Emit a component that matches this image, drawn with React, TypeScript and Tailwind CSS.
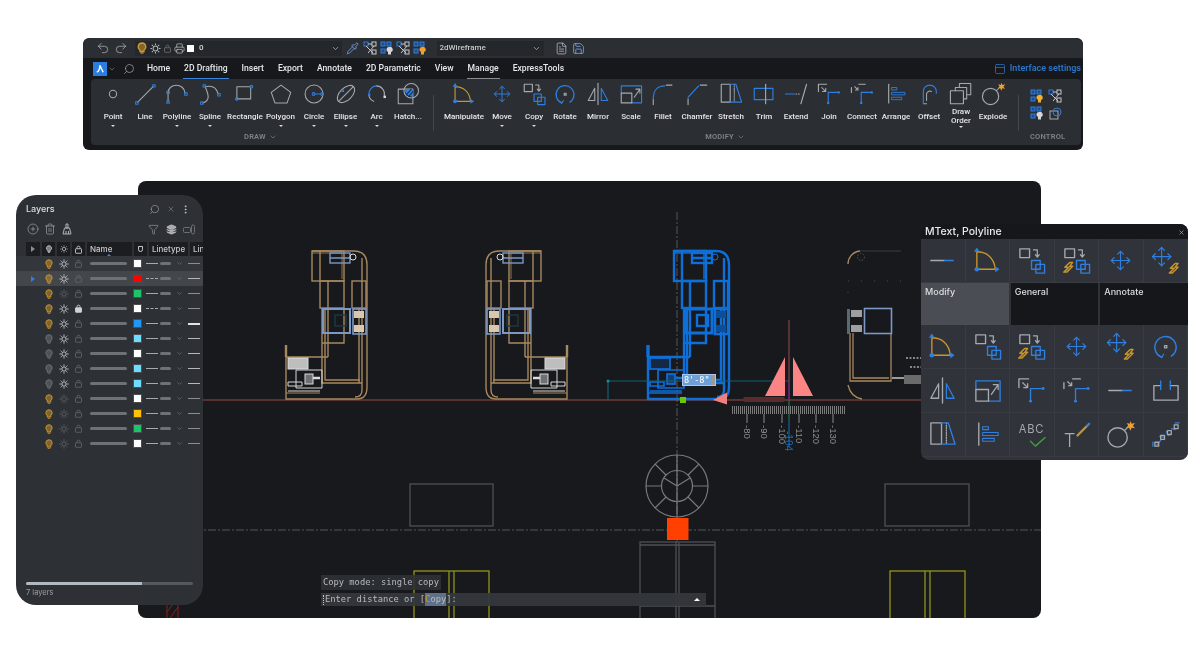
import { ReactNode } from 'react';
import { ChevronDown, Search, X, Filter, MoreVertical, CirclePlus, Trash2, Undo2, Redo2, Printer, FileText, Save, Pipette, PanelTop, Layers } from 'lucide-react';

const G = '#a6a9ad';
const B = '#2e7fe0';
const A = '#c9952b';

function Ico({ size = 26, children }: { size?: number; children: ReactNode }) {
  return (
    <svg width={size} height={size} viewBox="0 0 32 32" fill="none" strokeWidth={1.3} strokeLinecap="round" strokeLinejoin="round">
      {children}
    </svg>
  );
}

const Sq = ({ x, y, s = 3, c = B }: { x: number; y: number; s?: number; c?: string }) => (
  <rect x={x - s / 2} y={y - s / 2} width={s} height={s} stroke={c} />
);

const Bolt = ({ x, y }: { x: number; y: number }) => (
  <path transform={`translate(${x} ${y})`} d="M6 0 L1 5 H5 L0 10 M6 0 H9 L6 4 H9 L3 10 H0" stroke={A} strokeWidth={1.5} />
);

const MoveArrows = ({ x = 16, y = 16, r = 9.5 }: { x?: number; y?: number; r?: number }) => (
  <g stroke={B} strokeWidth={1.2}>
    <path d={`M${x - r} ${y} H${x + r} M${x} ${y - r} V${y + r}`} />
    <path d={`M${x - r + 3} ${y - 3} L${x - r} ${y} L${x - r + 3} ${y + 3} M${x + r - 3} ${y - 3} L${x + r} ${y} L${x + r - 3} ${y + 3} M${x - 3} ${y - r + 3} L${x} ${y - r} L${x + 3} ${y - r + 3} M${x - 3} ${y + r - 3} L${x} ${y + r} L${x + 3} ${y + r - 3}`} />
  </g>
);

const CopyShape = ({ dx = 0, dy = 0 }: { dx?: number; dy?: number }) => (
  <g transform={`translate(${dx} ${dy})`}>
    <rect x="4" y="4" width="10" height="9" stroke={G} strokeWidth={1.4} />
    <path d="M18 5 H22 V12 M20 10 L22 12.5 L24 10" stroke={G} />
    <rect x="16" y="16" width="9" height="9" stroke={B} strokeWidth={1.4} />
    <rect x="20.5" y="20" width="9" height="9" stroke={B} strokeWidth={1.4} />
  </g>
);

const icons: Record<string, ReactNode> = {
  Point: <circle cx="16" cy="16" r="4.5" stroke={G} />,
  Line: (
    <>
      <path d="M7 26 L26 7" stroke={G} />
      <Sq x={6} y={27} />
      <Sq x={27} y={6} />
    </>
  ),
  Polyline: (
    <>
      <path d="M5 25 V15 C5 2 25 2 26 15" stroke={G} />
      <Sq x={5} y={14} />
      <Sq x={5} y={26} />
      <Sq x={27} y={16} />
    </>
  ),
  Spline: (
    <>
      <path d="M7 27 C17 24 14 16 10 7 C18 5 24 8 26 16" stroke={G} />
      <Sq x={6} y={27} />
      <Sq x={9} y={6} />
      <Sq x={27} y={17} />
    </>
  ),
  Rectangle: (
    <>
      <rect x="6" y="7" width="17" height="15" stroke={G} />
      <circle cx="24" cy="7" r="1.6" stroke={B} />
      <circle cx="6" cy="22" r="1.6" stroke={B} />
    </>
  ),
  Polygon: <path d="M16 5 L28 14 L23.5 27 H8.5 L4 14 Z" stroke={G} />,
  Circle: (
    <>
      <circle cx="16" cy="16" r="11" stroke={G} />
      <path d="M17 16 H24" stroke={B} />
      <circle cx="15.5" cy="16" r="1.7" stroke={B} />
      <circle cx="26" cy="16" r="1.7" stroke={B} />
    </>
  ),
  Ellipse: (
    <>
      <ellipse cx="16" cy="16" rx="13" ry="7.5" transform="rotate(-45 16 16)" stroke={G} />
      <path d="M7 25 L25 7" stroke={G} />
      <Sq x={12} y={12} s={2} />
    </>
  ),
  Arc: (
    <>
      <path d="M15 6 A10 10 0 0 1 25 18" stroke={G} />
      <path d="M6 16 A10 10 0 0 1 15 6" stroke={B} />
      <path d="M6 18 A10 10 0 0 0 12 25" stroke={G} />
      <circle cx="6.5" cy="17" r="1" stroke={B} />
      <rect x="24" y="18" width="3" height="3" fill="#ddd" />
    </>
  ),
  'Hatch...': (
    <>
      <rect x="4" y="10" width="18" height="18" stroke={G} />
      <circle cx="20" cy="12" r="9" stroke={G} />
      <path d="M12 10 H22 V19 A9 9 0 0 1 12 10 Z" fill={B} />
      <path d="M14 17 L20 10 M17 19 L22 13" stroke="#14304f" />
    </>
  ),
  Manipulate: (
    <>
      <path d="M5 25 V7 C15 7 23 13 24 25 H5" stroke={A} strokeWidth={1.4} />
      <path d="M5 2.5 L2 7 H8 Z M28.5 25 L24 22 V28 Z" fill={B} />
      <circle cx="5" cy="25" r="2.4" fill={B} />
    </>
  ),
  Move: <MoveArrows />,
  Copy: <CopyShape />,
  CopyL: (
    <>
      <CopyShape />
      <Bolt x={3} y={18} />
    </>
  ),
  MoveL: (
    <>
      <MoveArrows x={12} y={12} />
      <Bolt x={20} y={19} />
    </>
  ),
  Rotate: (
    <>
      <path d="M12 27 A11 11 0 1 1 22 26" stroke={B} strokeWidth={1.5} />
      <path d="M9 25 L12 27.5 L14 24" stroke={B} />
      <rect x="15" y="15" width="2.4" height="2.4" stroke={G} />
    </>
  ),
  Mirror: (
    <>
      <path d="M16 3 V29" stroke={G} strokeWidth={1.4} />
      <path d="M12 9 V24 H4 Z" stroke={G} strokeWidth={1.3} />
      <path d="M20 9 V24 H28 Z" stroke={B} strokeWidth={1.3} />
    </>
  ),
  Scale: (
    <>
      <path d="M4 15 V6 H29 V27 H17" stroke={B} strokeWidth={1.4} />
      <rect x="4" y="15" width="13" height="12" stroke={G} strokeWidth={1.4} />
      <path d="M20 20 L27 10 M22 10 H27 V15" stroke={G} />
    </>
  ),
  Fillet: (
    <>
      <path d="M4 22 C4 12 9 6 18 6" stroke={B} strokeWidth={1.4} />
      <path d="M4 23 V29 M20 5 H27" stroke={G} strokeWidth={1.4} />
    </>
  ),
  Chamfer: (
    <>
      <path d="M5 20 L18 6" stroke={B} strokeWidth={1.4} />
      <path d="M5 22 V29 M20 5 H28" stroke={G} strokeWidth={1.4} />
    </>
  ),
  Stretch: (
    <>
      <rect x="4" y="4" width="11" height="22" stroke={G} strokeWidth={1.4} />
      <path d="M20 4 V26" stroke={G} strokeDasharray="1 1.5" />
      <path d="M15 4 H22 L29 26 H15" stroke={B} strokeWidth={1.4} />
    </>
  ),
  Trim: (
    <>
      <rect x="4" y="9" width="23" height="14" stroke={B} strokeWidth={1.4} />
      <path d="M18 4 V28" stroke={G} strokeWidth={1.4} />
    </>
  ),
  Extend: (
    <>
      <path d="M3 16 H14" stroke={B} strokeWidth={1.4} />
      <path d="M16 16 H20" stroke={G} strokeDasharray="1 2" />
      <path d="M22 28 L29 4" stroke={G} strokeWidth={1.4} />
    </>
  ),
  Join: (
    <>
      <path d="M3 13 V4 H13" stroke={G} strokeWidth={1.4} />
      <path d="M7 8 L12 13 M12 9 V13 H8" stroke={G} />
      <path d="M15 27 V14 H28" stroke={B} strokeWidth={1.4} />
      <circle cx="15" cy="27" r="1.5" fill={B} />
      <circle cx="28" cy="14" r="1.5" fill={B} />
    </>
  ),
  Connect: (
    <>
      <path d="M3 8 V14 M12 4 H20" stroke={G} strokeWidth={1.4} />
      <path d="M7 7 L11 11 M11 8 V11 H8" stroke={G} />
      <path d="M15 27 V14 H28" stroke={B} strokeWidth={1.4} />
      <circle cx="15" cy="27" r="1.5" fill={B} />
      <circle cx="28" cy="14" r="1.5" fill={B} />
    </>
  ),
  Arrange: (
    <>
      <path d="M7 4 V27" stroke={G} strokeWidth={1.4} />
      <rect x="11" y="8" width="6" height="3" stroke={B} strokeWidth={1.1} />
      <rect x="11" y="14" width="16" height="3" stroke={B} strokeWidth={1.1} />
      <rect x="11" y="20" width="12" height="3" stroke={B} strokeWidth={1.1} />
    </>
  ),
  Offset: (
    <>
      <path d="M9 28 V13 A8 8 0 0 1 25 13 V15" stroke={B} strokeWidth={1.4} />
      <path d="M13 28 H10 M13 24 V16 A4 4 0 0 1 19 13" stroke={G} />
    </>
  ),
  'Draw Order': (
    <>
      <path d="M14 8 V3 H28 V17 H23" stroke={G} />
      <path d="M9 12 V8 H23 V22 H19" stroke={G} />
      <rect x="3" y="12" width="16" height="16" stroke={G} strokeWidth={1.4} />
    </>
  ),
  Explode: (
    <>
      <circle cx="13" cy="19" r="10" stroke={G} strokeWidth={1.4} />
      <path d="M20 12 L24 8" stroke={G} />
      <path d="M26.5 2 L27.5 5 L31 4 L28.8 7 L31 9.5 L27.5 9 L26 12 L25 9 L22 9 L24 7 L22.5 4 L25.5 5 Z" fill="#f0a030" />
    </>
  ),
  LineSeg: (
    <>
      <path d="M4 16 H18" stroke={G} strokeWidth={1.5} />
      <path d="M18 16 H27" stroke={B} strokeWidth={1.5} />
    </>
  ),
  Brackets: (
    <>
      <path d="M4 11 V26 H29 V11 H21 M4 11 H11" stroke={G} strokeWidth={1.4} />
      <path d="M11 6 V15 M21 6 V15" stroke={B} strokeWidth={1.4} />
    </>
  ),
  ABC: (
    <>
      <text x="16" y="14" textAnchor="middle" fontSize="11.5" fill={G} stroke="none" fontFamily="Inter, sans-serif" letterSpacing="0.8">ABC</text>
      <path d="M15 23 L20 28 L30 19" stroke="#3ea03a" strokeWidth={1.4} />
    </>
  ),
  TPencil: (
    <>
      <text x="9" y="29" textAnchor="middle" fontSize="19" fill={G} stroke="none" fontFamily="Inter, sans-serif" fontWeight="300">T</text>
      <path d="M17 17 L27 7" stroke={A} strokeWidth={2.4} />
      <path d="M27 7 L29 5" stroke={B} strokeWidth={2.4} />
    </>
  ),
  Chain: (
    <>
      <path d="M3 28 V24 M7 27 L11 22 M10 18 L15 19 M17 13 L19 17 M22 10 L26 11 M26 4 L30 4" stroke={B} />
      <rect x="5" y="24" width="4" height="4" stroke={G} />
      <rect x="11" y="17" width="4" height="4" stroke={G} />
      <rect x="18" y="12" width="4" height="4" stroke={G} />
      <rect x="25" y="6" width="4" height="4" stroke={G} />
    </>
  ),
};

const Caret = () => <span className="w-0 h-0 border-x-[2px] border-x-transparent border-t-[2.5px] border-t-[#d8dade]" />;

const drawTools = [
  { name: 'Point', w: 'w-[32px]', caret: true },
  { name: 'Line', w: 'w-[32px]' },
  { name: 'Polyline', w: 'w-[32px]', caret: true },
  { name: 'Spline', w: 'w-[34px]', caret: true },
  { name: 'Rectangle', w: 'w-[36px]' },
  { name: 'Polygon', w: 'w-[35px]', caret: true },
  { name: 'Circle', w: 'w-[32px]', caret: true },
  { name: 'Ellipse', w: 'w-[31px]', caret: true },
  { name: 'Arc', w: 'w-[31px]', caret: true },
  { name: 'Hatch...', w: 'w-[32px]' },
];

const modifyTools = [
  { name: 'Manipulate', w: 'w-[40px]' },
  { name: 'Move', w: 'w-[36px]', caret: true },
  { name: 'Copy', w: 'w-[28px]', caret: true },
  { name: 'Rotate', w: 'w-[34px]' },
  { name: 'Mirror', w: 'w-[32px]' },
  { name: 'Scale', w: 'w-[34px]' },
  { name: 'Fillet', w: 'w-[30px]' },
  { name: 'Chamfer', w: 'w-[38px]' },
  { name: 'Stretch', w: 'w-[30px]' },
  { name: 'Trim', w: 'w-[36px]' },
  { name: 'Extend', w: 'w-[28px]' },
  { name: 'Join', w: 'w-[38px]' },
  { name: 'Connect', w: 'w-[28px]' },
  { name: 'Arrange', w: 'w-[40px]' },
  { name: 'Offset', w: 'w-[26px]' },
  { name: 'Draw Order', w: 'w-[38px]', caret: true },
  { name: 'Explode', w: 'w-[26px]' },
];

function Tool({ name, w, caret }: { name: string; w: string; caret?: boolean }) {
  const stacked = name === 'Draw Order';
  return (
    <div className={`${w} flex flex-col items-center`}>
      <div className="h-[30px] flex items-center justify-center">
        <Ico>{icons[name]}</Ico>
      </div>
      {stacked ? (
        <div className="mt-[-1px] text-center text-[8px] leading-[8.5px] font-medium text-[#e4e6e8]">
          Draw
          <br />
          Order
        </div>
      ) : (
        <div className="mt-[3px] h-[10px] whitespace-nowrap text-[8px] leading-[10px] font-medium text-[#e4e6e8]">{name}</div>
      )}
      {caret && <div className={stacked ? 'mt-[1px] flex' : 'mt-[3px] flex'}><Caret /></div>}
    </div>
  );
}

const GroupLabel = ({ children }: { children: string }) => (
  <div className="h-[12px] flex items-center justify-center gap-[3px] text-[7.5px] font-semibold tracking-[0.2px] text-[#7f8388]">
    {children}
    {children !== 'CONTROL' && <ChevronDown size={8} color="#7f8388" />}
  </div>
);

const tabs = ['Home', '2D Drafting', 'Insert', 'Export', 'Annotate', '2D Parametric', 'View', 'Manage', 'ExpressTools'];

const Bulb = ({ c, size = 10 }: { c: string; size?: number }) => (
  <svg width={size} height={size} viewBox="0 0 12 12" fill="none" stroke={c} strokeWidth="1.3">
    <path d="M6 1 A3.8 3.8 0 0 1 8 8 V9.5 H4 V8 A3.8 3.8 0 0 1 6 1 Z" fill={c} fillOpacity="0.55" />
    <path d="M4.5 11 H7.5" />
  </svg>
);

const Sun = ({ c, size = 10 }: { c: string; size?: number }) => (
  <svg width={size} height={size} viewBox="0 0 12 12" fill="none" stroke={c} strokeWidth="1.1">
    <circle cx="6" cy="6" r="2.6" />
    <path d="M6 .5 V2.2 M6 9.8 V11.5 M.5 6 H2.2 M9.8 6 H11.5 M2 2 L3.2 3.2 M8.8 8.8 L10 10 M2 10 L3.2 8.8 M8.8 3.2 L10 2" />
  </svg>
);

const Lock = ({ c, fill }: { c: string; fill?: boolean }) => (
  <svg width="9" height="9" viewBox="0 0 12 12" fill="none" stroke={c} strokeWidth="1.2">
    <path d="M4 5 V3.5 A2 2 0 0 1 8 3.5 V5" />
    <rect x="2" y="5" width="8" height="6" rx="0.6" fill={fill ? c : 'none'} />
  </svg>
);

const Broom = () => (
  <svg width="12" height="12" viewBox="0 0 12 12" fill="none" stroke="#b0b3b7" strokeWidth="1">
    <path d="M5 1 H7 V5 H5 Z M3.5 5 H8.5 L10 11 H2 Z M5 8 V11 M7.5 8 V11" />
  </svg>
);

const QuadDots = ({ bulb }: { bulb: string }) => (
  <svg width="15" height="15" viewBox="0 0 15 15" fill="none">
    <rect x="1" y="1" width="4" height="4" stroke={B} fill="#1d4f8c" />
    <rect x="7" y="1" width="4" height="4" stroke={B} fill="#1d4f8c" />
    <rect x="1" y="8" width="4" height="4" stroke={B} fill="#1d4f8c" />
    <path d="M9 6 A2.6 2.6 0 0 1 11 11 V13.5 H8 V11 A2.6 2.6 0 0 1 9 6 Z" fill={bulb} />
  </svg>
);

const Network = () => (
  <svg width="15" height="15" viewBox="0 0 15 15" fill="none" stroke="#c6c8cc" strokeWidth="1">
    <rect x="1" y="1" width="4" height="4" stroke={B} />
    <rect x="9" y="1" width="4" height="4" />
    <rect x="9" y="9" width="4" height="4" />
    <path d="M5 3 H9 M3 5 L10 12 M11 5 L5 12" />
  </svg>
);

function TopBar() {
  return (
    <div className="h-[20px] bg-[#2b2e33] rounded-t-[8px] flex items-center pl-[13px] text-[#c9cbcf]">
      <Undo2 size={14} strokeWidth={1.3} color="#b0b3b7" />
      <Redo2 size={14} strokeWidth={1.3} color="#b0b3b7" className="ml-[4px]" />
      <div className="ml-[7px] w-[207px] h-[15px] bg-[#24272b] flex items-center pl-[1px]">
        <span className="ml-[0px]"><Bulb c="#d09a2c" size={12} /></span>
        <span className="ml-[2px]"><Sun c="#b5b7ba" size={11} /></span>
        <span className="ml-[2px]"><Lock c="#66696d" /></span>
        <Printer size={11} strokeWidth={1.4} color="#d0d2d5" className="ml-[2px]" />
        <span className="ml-[2px] w-[7px] h-[7px] bg-white" />
        <span className="ml-[5px] text-[8px] font-medium text-[#d4d6d9]">0</span>
        <ChevronDown size={9} className="ml-auto mr-[2px]" color="#b5b7ba" />
      </div>
      <Pipette size={13} strokeWidth={1.4} color="#7db0f0" className="ml-[4px]" />
      <div className="ml-[4px] flex gap-[1.5px]">
        <Network />
        <QuadDots bulb="#d5d7da" />
        <Network />
        <QuadDots bulb="#f0a030" />
      </div>
      <div className="ml-[9px] w-[107px] h-[15px] bg-[#24272b] flex items-center pl-[3px] text-[8px] font-medium text-[#c6c8cc]">
        2dWireframe
        <ChevronDown size={9} className="ml-auto mr-[3px]" color="#b5b7ba" />
      </div>
      <FileText size={13} strokeWidth={1.3} color="#c6c8cc" className="ml-[11px]" />
      <Save size={13} strokeWidth={1.4} color="#7db0f0" className="ml-[4px]" />
    </div>
  );
}

function TabBar() {
  return (
    <div className="h-[21px] flex items-center pl-[10px] pr-[2px]">
      <div className="w-[14px] h-[14px] bg-[#2a7de1] flex items-center justify-center">
        <svg width="8" height="8" viewBox="0 0 10 10" fill="none" stroke="white" strokeWidth="1.8">
          <path d="M1 9 C3.5 8 4.5 5 5 1 L9 9" />
        </svg>
      </div>
      <ChevronDown size={8} color="#7f8388" className="ml-[1px]" />
      <Search size={12} strokeWidth={1.4} color="#a6a9ad" className="ml-[7px] -scale-x-100" />
      <div className="ml-[5px] flex h-full">
        {tabs.map(t => (
          <div key={t} className="relative flex items-center px-[7px] text-[8.6px] font-medium text-[#e6e8ea]">
            {t}
            {t === '2D Drafting' && <span className="absolute left-[6px] right-[6px] bottom-[0px] h-[1px] bg-[#3a85e0]" />}
            {t === 'Manage' && <span className="absolute left-[6px] right-[6px] bottom-[0px] h-[1px] bg-[#8a8d91]" />}
          </div>
        ))}
      </div>
      <div className="ml-auto flex items-center gap-[4px] text-[9px] font-semibold text-[#2a76c8]">
        <PanelTop size={12} strokeWidth={1.5} color="#2a76c8" />
        Interface settings
      </div>
    </div>
  );
}

function Ribbon() {
  return (
    <div className="absolute left-[83px] top-[38px] w-[1000px] h-[112px] bg-[#16181b] rounded-[6px] font-[Roboto,sans-serif]">
      <TopBar />
      <TabBar />
      <div className="ml-[8px] mr-[2px] h-[66px] bg-[#2b2e33] rounded-[4px] flex pl-[6px]">
        <div className="flex flex-col">
          <div className="h-[52px] flex">
            {drawTools.map(t => <Tool key={t.name} {...t} />)}
          </div>
          <GroupLabel>DRAW</GroupLabel>
        </div>
        <div className="ml-[9px] mt-[16px] mb-[14px] w-px bg-[#43464b]" />
        <div className="ml-[10px] flex flex-col">
          <div className="h-[52px] flex">
            {modifyTools.map(t => <Tool key={t.name} {...t} />)}
          </div>
          <GroupLabel>MODIFY</GroupLabel>
        </div>
        <div className="ml-[12px] mt-[16px] mb-[14px] w-px bg-[#43464b]" />
        <div className="ml-[11px] flex flex-col">
          <div className="h-[52px] pt-[10px]">
            <div className="grid grid-cols-2 gap-x-[1px] gap-y-[2px]">
              <QuadDots bulb="#f0b030" />
              <Network />
              <QuadDots bulb="#d5d7da" />
              <svg width="15" height="15" viewBox="0 0 15 15" fill="none" stroke="#a6a9ad">
                <rect x="2" y="5" width="8" height="8" />
                <circle cx="9" cy="6" r="4" stroke={B} />
              </svg>
            </div>
          </div>
          <GroupLabel>CONTROL</GroupLabel>
        </div>
      </div>
    </div>
  );
}

// one of the side elevations in the drawing
function Elevation({ tan, blue, cream, white, inner, sw = 1.4, block = 0.85 }: { tan: string; blue: string; cream: string; white: string; inner: string; sw?: number; block?: number }) {
  return (
    <g fill="none" strokeWidth={sw}>
      <g stroke={tan}>
        <path d="M42 11 H84 Q97 11 97 25 V147 Q97 159 87 159 H16 V117 H58" />
        <path d="M92 18 V150 Q92 157 85 157" />
        <rect x="42" y="11" width="32" height="30" />
        <path d="M42 13 H72 V39" strokeWidth={sw * 0.6} />
        <rect x="82" y="41" width="14" height="27" />
        <rect x="50" y="41" width="24" height="27" />
        <path d="M50 11 V41 M58 41 V117 M52 68 V143 H92 M55 68 V140 H90 M52 95 V103 H74 V68" />
        <path d="M89 68 V143" />
        <path d="M16 153 H50" strokeWidth={sw * 0.7} />
      </g>
      <path d="M16 105 V117" stroke={tan} strokeWidth={sw + 1} />
      <g stroke={blue}>
        <rect x="53" y="69" width="27" height="24" strokeWidth={sw + 0.6} />
        <rect x="83" y="69" width="13" height="25" strokeWidth={sw + 0.2} />
        <rect x="60" y="13" width="20" height="10" />
        <path d="M60 18 H80" />
      </g>
      <rect x="65" y="75" width="11" height="11" stroke={inner} />
      <circle cx="83" cy="17" r="3" stroke={white} strokeWidth={1} />
      <rect x="84" y="71" width="10" height="7" fill={cream} />
      <rect x="84" y="85" width="10" height="7" fill={cream} />
      <g stroke={white} strokeWidth={sw * 0.7}>
        <rect x="18" y="118" width="20" height="11" fill={white} fillOpacity={block} />
        <path d="M26 130 H52 V148 H26 Z M18 142 H32 V146 H18 Z M18 151 H50" />
        <rect x="35" y="134" width="8" height="10" fill={white} fillOpacity="0.45" />
        <path d="M43 138 H50" strokeWidth={2.5} />
      </g>
    </g>
  );
}

function Drawing() {
  const tan = '#a8895f';
  const rulerLabels = [
    { t: '-80', x: 747 },
    { t: '-90', x: 764 },
    { t: '-100', x: 782 },
    { t: '-110', x: 799 },
    { t: '-120', x: 816 },
    { t: '-130', x: 833 },
  ];
  return (
    <svg className="block" width="903" height="437" viewBox="138 181 903 437" fill="none">
      {/* grid axes */}
      <path d="M677 212 V545" stroke="#55575a" strokeDasharray="8 2 2 2" />
      <path d="M138 530 H1041" stroke="#55575a" strokeDasharray="8 2 2 2" />
      <path d="M203 400 H921" stroke="#9a4a4a" strokeWidth="1.2" />

      <g transform="translate(270 240)">
        <Elevation tan={tan} blue="#7d98c4" cream="#d8c8b0" white="#dcdcdc" inner="#1d3a44" />
      </g>
      <g transform="translate(583 240) scale(-1 1)">
        <Elevation tan={tan} blue="#7d98c4" cream="#d8c8b0" white="#dcdcdc" inner="#1d3a44" />
      </g>
      <g transform="translate(632 240)">
        <Elevation tan="#0f6fd8" blue="#0f6fd8" cream="#0a4f9e" white="#0f6fd8" inner="#0f6fd8" sw={2.4} block={0.2} />
      </g>

      {/* partly hidden elevation */}
      <g stroke={tan} strokeWidth="1.3">
        <path d="M848 264 C848 258 852 252 860 251" />
        <path d="M860 251 H901" stroke="#2a2a2a" strokeWidth="2" />
        <path d="M850 333 V381 H891 V333 M853 333 V378 H889" />
        <path d="M848 385 C850 394 856 398 862 399" />
      </g>
      <path d="M848 281 H901 M848 292 V300" stroke="#4a4a4a" strokeDasharray="1 12" />
      <rect x="864.5" y="308.5" width="27" height="25" stroke="#7d98c4" strokeWidth="1.6" />
      <rect x="847" y="309" width="3" height="25" fill="#5b6a70" />
      <rect x="851" y="310" width="11" height="7" fill="#d8d8d8" fillOpacity="0.7" />
      <rect x="851" y="325" width="11" height="7" fill="#d8d8d8" fillOpacity="0.7" />
      <circle cx="861" cy="257" r="3.5" stroke="#555" strokeDasharray="1.5 1.5" />
      <path d="M906 358 H921 M910 367 H921" stroke="#a8a8a8" strokeWidth="1.5" strokeDasharray="2 1.5" />
      <path d="M892 378 H905" stroke="#c8c8c8" strokeWidth="1.5" />
      <rect x="904" y="375" width="17" height="9" fill="#6a6a6a" />

      {/* dynamic dimension */}
      <path d="M608 381 H789" stroke="#15606f" strokeWidth="1.2" />
      <path d="M608 381 V400" stroke="#15606f" strokeWidth="1.2" />
      <circle cx="608" cy="381" r="1.5" fill="#1c8aa0" />
      <rect x="680" y="397" width="6" height="6" fill="#66cc00" />
      <path d="M713 400 L727 392.5 V404.5 Z" fill="#f08080" />
      <rect x="743" y="397" width="42" height="5" rx="2" fill="#5a2c2c" />
      <path d="M785 357 L765 396 H785 Z M793 357 L813 396 H793 Z" fill="#fb8585" />
      <path d="M789 320 V381" stroke="#6b3b3b" strokeWidth="1.5" />
      <path d="M789 381 V400" stroke="#7a2a80" strokeWidth="1.5" />
      <path d="M789 400 V420" stroke="#1c7a44" strokeWidth="1.2" />
      <path d="M789 420 V447" stroke="#1a5f9c" strokeWidth="1.2" />

      {/* angle ruler */}
      <rect x="732" y="406" width="114" height="8" fill="url(#ticks)" />
      <defs>
        <pattern id="ticks" width="2" height="8" patternUnits="userSpaceOnUse">
          <rect width="1" height="8" fill="#7c7c7c" />
        </pattern>
      </defs>
      {rulerLabels.map(l => (
        <g key={l.t}>
          <path d={`M${l.x} 414 V423`} stroke="#8c8c8c" />
          <text
            transform={`translate(${l.x - 3} 425) rotate(90)`}
            fontSize="9.5"
            fill="#8f8f8f"
            fontFamily="Liberation Sans, sans-serif"
          >
            {l.t}
          </text>
        </g>
      ))}
      <text transform="translate(785 431) rotate(90)" fontSize="10" fill="#1a6fc0" fontFamily="Liberation Sans, sans-serif">-104</text>

      {/* wheel */}
      <g stroke="#77797c" strokeWidth="1.2">
        <circle cx="677" cy="486" r="31" />
        <circle cx="677" cy="486" r="15.5" />
        <path d="M677 455 V517 M677 486 L664 478 M677 486 L690 478 M646 486 H662 M692 486 H708 M655 464 L666 475 M699 464 L688 475 M655 508 L666 497 M699 508 L688 497" />
      </g>
      <rect x="667" y="518" width="21.5" height="22" fill="#ff4000" />

      {/* blocks */}
      <g stroke="#4e5053" strokeWidth="1.3">
        <rect x="410" y="484" width="83" height="42" />
        <rect x="885" y="484" width="84" height="42" />
        <rect x="640" y="542" width="75" height="80" />
        <path d="M640 545 H715 M640 606 H715 M676 542 V622 M679 542 V622" />
      </g>
      <g stroke="#94941a" strokeWidth="1.3">
        <rect x="414" y="571" width="75" height="60" />
        <rect x="890" y="571" width="75" height="60" />
        <path d="M449 571 V620 M454 571 V620 M925 571 V620 M930 571 V620" />
      </g>
      <g stroke="#8c1f1f">
        <path d="M167 600 V618 M178 600 V618 M167 612 L173 604 M170 618 L178 607" />
      </g>
    </svg>
  );
}

function Canvas() {
  return (
    <div className="absolute left-[138px] top-[181px] w-[903px] h-[437px] bg-[#17191d] rounded-[8px] overflow-hidden">
      <Drawing />
      <div className="absolute left-[544px] top-[193px] w-[34px] h-[12px] bg-[#6d9fd8] border border-[#a8c8ee] flex items-center pl-[1px] font-['DejaVu_Sans_Mono',monospace] text-[8.5px] text-white">
        8'-8"
        <span className="ml-auto h-full w-[3px] bg-[#9a9a9a]" />
      </div>
      <div className="absolute left-[183px] bottom-[12px] flex flex-col items-start gap-[3px] font-['DejaVu_Sans_Mono',monospace] text-[8.75px] text-[#b8bbbe]">
        <div className="h-[15px] px-[2px] flex items-center bg-[#2e3236]/90">Copy mode: single copy</div>
        <div className="w-[385px] h-[13px] pl-[2px] flex items-center bg-[#34383c]/95">
          <span className="mr-[1px] h-[10px] border-l border-dotted border-[#c8c8c8]" />
          <span>Enter distance or [</span>
          <span className="bg-[#5f7188]"><span className="text-[#d69a2a]">C</span>opy</span>
          <span>]:</span>
          <span className="ml-auto mr-[6px] w-0 h-0 border-x-[3px] border-x-transparent border-b-[3px] border-b-white" />
        </div>
      </div>
    </div>
  );
}

const layerRows = [
  { on: true, sun: true, color: '#ffffff', dash: false, weight: 'thin', bg: 'bg-[#33363b]' },
  { on: true, sun: true, color: '#ff0000', dash: true, weight: 'mid', active: true, bg: 'bg-[#43464b]' },
  { on: true, sun: false, color: '#1ec46a', dash: false, weight: 'thin' },
  { on: true, sun: true, color: '#ffffff', dash: true, weight: 'thin', locked: true },
  { on: true, sun: true, color: '#2196f3', dash: false, weight: 'thick' },
  { on: false, sun: true, color: '#6fdcff', dash: false, weight: 'mid' },
  { on: false, sun: true, color: '#ffffff', dash: false, weight: 'mid' },
  { on: false, sun: true, color: '#6fdcff', dash: false, weight: 'mid' },
  { on: false, sun: true, color: '#6fdcff', dash: false, weight: 'mid' },
  { on: true, sun: false, color: '#ffffff', dash: false, weight: 'thin' },
  { on: true, sun: false, color: '#ffc107', dash: false, weight: 'thin' },
  { on: true, sun: false, color: '#1ec46a', dash: false, weight: 'thin' },
  { on: true, sun: false, color: '#ffffff', dash: false, weight: 'thin' },
];

const layerGrid = 'grid grid-cols-[14px_2px_13px_2px_13px_2px_13px_2px_45px_2px_13px_2px_39px_2px_13px]';

function LayersPanel() {
  return (
    <div className="absolute left-[16px] top-[195px] w-[187px] h-[410px] bg-[#2d3035] rounded-[20px] flex flex-col font-[Inter,sans-serif] overflow-hidden">
      <div className="mt-[8px] h-[12px] pl-[10px] pr-[12px] flex items-center text-[9px] font-medium text-[#dcdee0]">
        Layers
        <Search size={11} strokeWidth={1.3} color="#a6a9ad" className="ml-auto -scale-x-100" />
        <X size={8} strokeWidth={1.3} color="#a6a9ad" className="ml-[7px]" />
        <MoreVertical size={11} strokeWidth={2} color="#c6c8cc" className="ml-[5px]" />
      </div>
      <div className="mt-[7px] h-[14px] pl-[11px] pr-[8px] flex items-center">
        <CirclePlus size={12} strokeWidth={1.2} color="#b0b3b7" />
        <Trash2 size={12} strokeWidth={1.2} color="#b0b3b7" className="ml-[5px]" />
        <span className="ml-[5px]"><Broom /></span>
        <Filter size={11} strokeWidth={1.2} color="#b0b3b7" className="ml-auto" />
        <Layers size={11} strokeWidth={1.5} color="#d0d2d5" fill="#a6a9ad" className="ml-[7px]" />
        <svg width="12" height="11" viewBox="0 0 12 11" fill="none" stroke="#6c6f73" className="ml-[6px]">
          <rect x="0.5" y="3.5" width="7" height="5" rx="1" />
          <rect x="8.5" y="1" width="3" height="9" rx="1.5" />
        </svg>
      </div>
      <div className={`mt-[6px] ml-[10px] h-[14px] ${layerGrid} text-[8px] font-medium text-[#c6c8cc]`}>
        <div className="bg-[#1b1d20] flex items-center justify-center">
          <span className="w-0 h-0 border-y-[3px] border-y-transparent border-l-[4px] border-l-[#8a8d91]" />
        </div>
        <div />
        <div className="bg-[#1b1d20] flex items-center justify-center"><Bulb c="#c6c8cc" size={8} /></div>
        <div />
        <div className="bg-[#1b1d20] flex items-center justify-center"><Sun c="#c6c8cc" size={8} /></div>
        <div />
        <div className="bg-[#1b1d20] flex items-center justify-center"><Lock c="#c6c8cc" /></div>
        <div />
        <div className="relative bg-[#1b1d20] pl-[3px] flex items-center">
          Name
          <span className="absolute left-[20px] bottom-0 w-0 h-0 border-x-[2px] border-x-transparent border-b-[2px] border-b-[#3a85e0]" />
        </div>
        <div />
        <div className="bg-[#1b1d20] flex items-center justify-center">
          <span className="w-[5px] h-[6px] rounded-b-full rounded-t-[2px] border border-[#c6c8cc]" />
        </div>
        <div />
        <div className="bg-[#1b1d20] pl-[3px] flex items-center">Linetype</div>
        <div />
        <div className="bg-[#1b1d20] pl-[3px] flex items-center overflow-hidden">Lin</div>
      </div>
      <div className="flex flex-col">
        {layerRows.map((r, i) => (
          <div key={i} className={`h-[15px] pl-[10px] flex items-center ${r.bg ?? ''}`}>
            <div className="w-[14px] flex justify-center">
              {r.active && <span className="w-0 h-0 border-y-[3px] border-y-transparent border-l-[4px] border-l-[#2e7fe0]" />}
            </div>
            <div className="ml-[2px] w-[13px] flex justify-center"><Bulb c={r.on ? '#c08f2e' : '#6a6d70'} size={10} /></div>
            <div className="ml-[2px] w-[13px] flex justify-center"><Sun c={r.sun ? '#d0d2d5' : '#5d6063'} size={10} /></div>
            <div className="ml-[2px] w-[13px] flex justify-center"><Lock c={r.locked ? '#d0d2d5' : '#606366'} fill={r.locked} /></div>
            <div className="ml-[5px] w-[37px] h-[3px] rounded-full bg-[#6e7175]" />
            <div className="ml-[7px] w-[7px] h-[7px] outline outline-1 outline-[#4a4d50]" style={{ backgroundColor: r.color }} />
            <div className={`ml-[5px] w-[12px] ${r.dash ? 'border-t border-dashed border-[#a6a9ad]' : 'h-px bg-[#a6a9ad]'}`} />
            <div className="ml-[2px] w-[11px] h-[3px] rounded-full bg-[#6e7175]" />
            <ChevronDown size={7} color="#7c7f83" className="ml-[5px]" />
            <div className={`ml-[5px] w-[12px] ${r.weight === 'thick' ? 'h-[2px] bg-[#e0e2e4]' : r.weight === 'mid' ? 'h-[1.5px] bg-[#b5b7ba]' : 'h-px bg-[#8a8d91]'}`} />
          </div>
        ))}
      </div>
      <div className="mt-auto mx-[10px] h-[3px] rounded-full bg-[#55585c] overflow-hidden">
        <div className="w-[116px] h-full bg-[#b2b9c0]" />
      </div>
      <div className="mt-[3px] mb-[7px] ml-[10px] text-[7.5px] leading-[10px] text-[#9a9ea3]">7 layers</div>
    </div>
  );
}

const quadTop = ['LineSeg', 'Manipulate', 'Copy', 'CopyL', 'Move', 'MoveL'];
const quadBottom = [
  'Manipulate', 'Copy', 'CopyL', 'Move', 'MoveL', 'Rotate',
  'Mirror', 'Scale', 'Join', 'Connect', 'LineSeg', 'Brackets',
  'Stretch', 'Arrange', 'ABC', 'TPencil', 'Explode', 'Chain',
];

const QuadCell = ({ name }: { name: string }) => (
  <div className="h-[44px] flex items-center justify-center border-r border-b border-[#383c42]">
    <Ico size={31}>{icons[name]}</Ico>
  </div>
);

function QuadMenu() {
  return (
    <div className="absolute left-[921px] top-[224px] w-[267px] h-[236px] bg-[#30343a] rounded-[8px] overflow-hidden font-[Inter,sans-serif]">
      <div className="h-[15px] bg-[#16171a] pl-[4px] pr-[3px] pt-[1px] flex items-center text-[10.5px] font-medium text-[#e8eaec]">
        MText, Polyline
        <X size={7} strokeWidth={2} color="#c6c8cc" className="ml-auto" />
      </div>
      <div className="grid grid-cols-6">
        {quadTop.map((n, i) => <QuadCell key={i} name={n} />)}
      </div>
      <div className="h-[42px] grid grid-cols-3 gap-[2px] text-[9px] font-medium text-[#dcdee0]">
        <div className="bg-[#4a4d53] pl-[4px] pt-[2px]">Modify</div>
        <div className="bg-[#16171a] pl-[4px] pt-[2px]">General</div>
        <div className="bg-[#16171a] pl-[4px] pt-[2px]">Annotate</div>
      </div>
      <div className="grid grid-cols-6">
        {quadBottom.map((n, i) => <QuadCell key={i} name={n} />)}
      </div>
    </div>
  );
}

export default function App() {
  return (
    <div className="relative w-[1200px] h-[669px] bg-white overflow-hidden blur-[0.35px]">
      <Ribbon />
      <Canvas />
      <LayersPanel />
      <QuadMenu />
    </div>
  );
}
